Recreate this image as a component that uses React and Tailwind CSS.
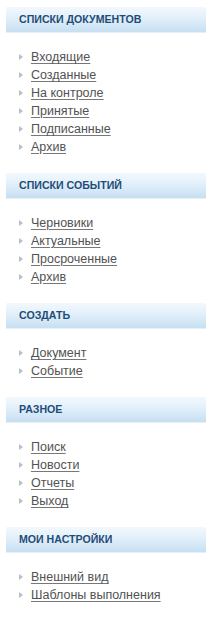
import React from 'react';

const sections = [
    { title: "Списки документов", items: ["Входящие", "Созданные", "На контроле", "Принятые", "Подписанные", "Архив"] },
    { title: "Списки событий", items: ["Черновики", "Актуальные", "Просроченные", "Архив"] },
    { title: "Создать", items: ["Документ", "Событие"] },
    { title: "Разное", items: ["Поиск", "Новости", "Отчеты", "Выход"] },
    { title: "Мои настройки", items: ["Внешний вид", "Шаблоны выполнения"] },
];

const Arrow = () => (
    <svg width="4" height="6" viewBox="0 0 4 6" className="shrink-0">
        <path d="M0 0 L4 3 L0 6 Z" fill="#b9bec3" />
    </svg>
);

export default function App() {
    return (
        <div className="w-[213px] min-h-[619px] bg-white pt-[7px] pl-[6px]" style={{ fontFamily: '"Liberation Sans", Arial, sans-serif' }}>
            <div className="w-[200px]">
                {sections.map((s) => (
                    <div key={s.title}>
                        <div className="h-[26px] flex items-center pl-[13px] bg-gradient-to-b from-[#f3f9fd] via-[#e0eef9] to-[#c6dff2] border-b border-[#e6f0f8] text-[10.6px] font-bold uppercase text-[#1f4d78]">
                            {s.title}
                        </div>
                        <ul className="pt-[15px] pb-[17px]">
                            {s.items.map((item) => (
                                <li key={item} className="h-[18px] flex items-center pl-[13px] gap-[8px]">
                                    <Arrow />
                                    <a href="#" className="text-[12.5px] leading-[18px] text-[#525252] underline underline-offset-2 decoration-[#777]">
                                        {item}
                                    </a>
                                </li>
                            ))}
                        </ul>
                    </div>
                ))}
            </div>
        </div>
    );
}
